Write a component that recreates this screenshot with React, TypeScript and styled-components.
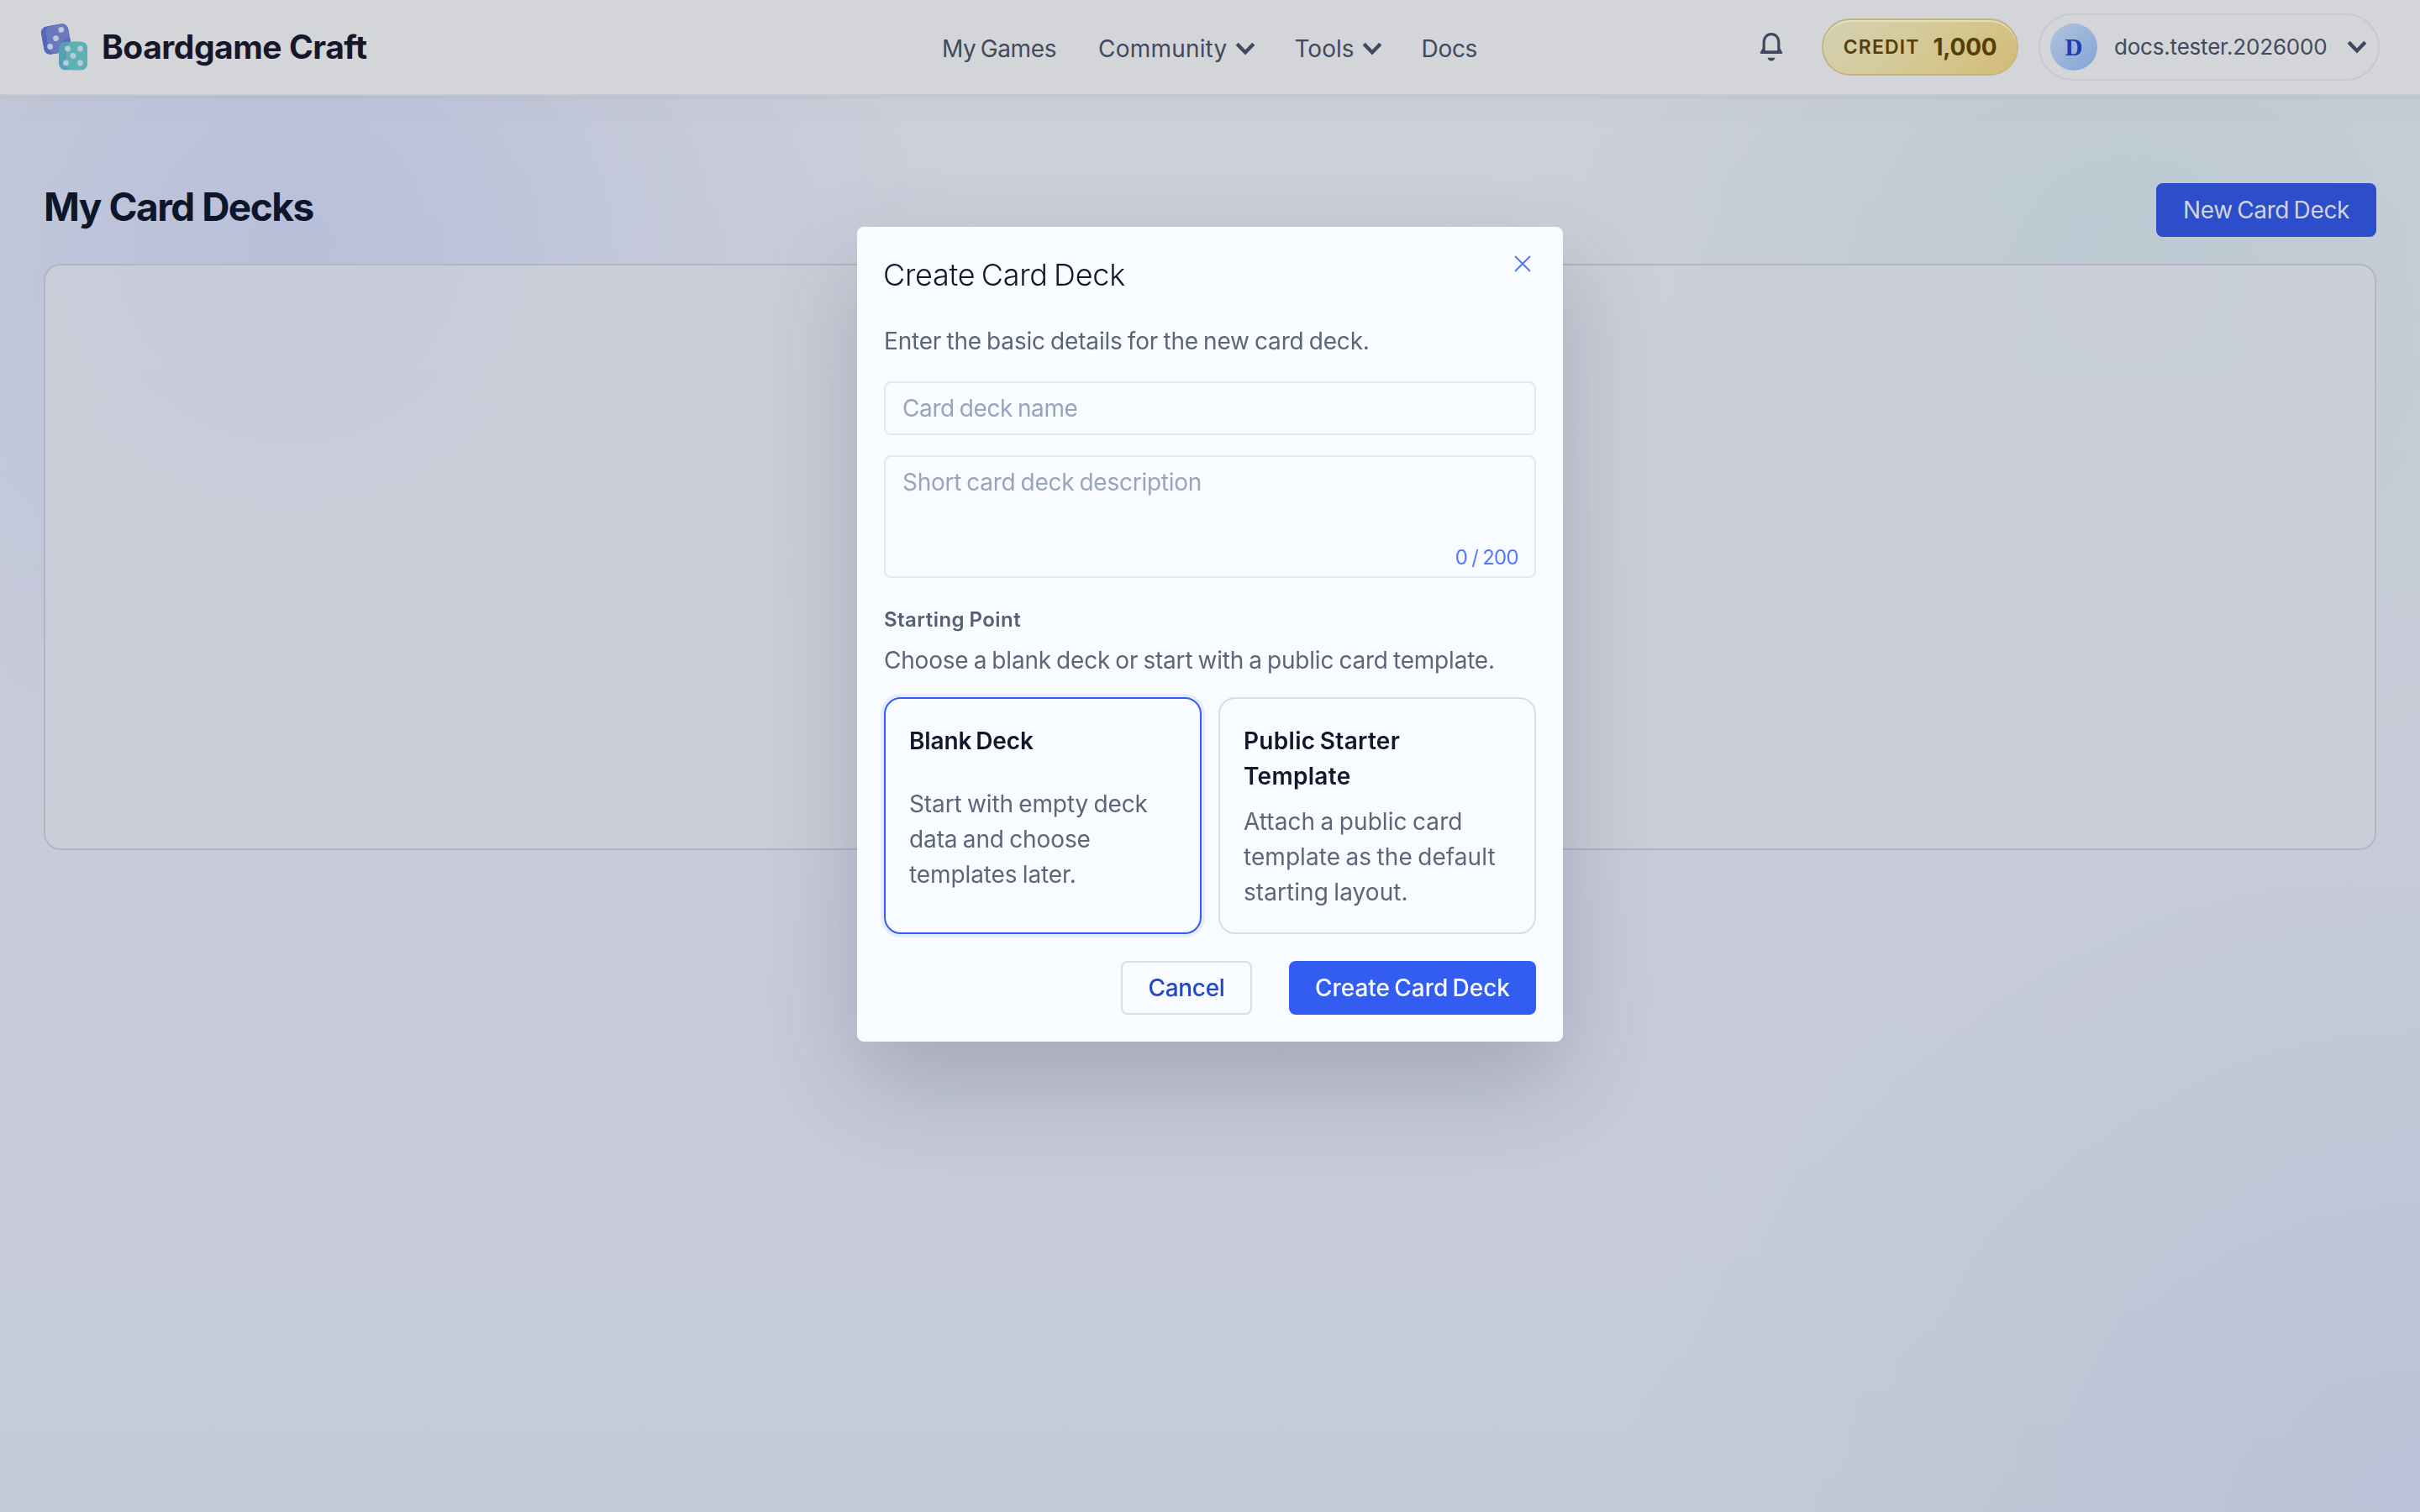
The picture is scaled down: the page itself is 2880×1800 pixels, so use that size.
import React from 'react';
import styled, { createGlobalStyle } from 'styled-components';

const GlobalStyle = createGlobalStyle`
  * { box-sizing: border-box; }
  body {
    margin: 0;
    font-family: Inter, "Liberation Sans", sans-serif;
    background: #c8ccd8;
  }
  button { font: inherit; }
  h1, h2, p { margin: 0; }
`;

const Page = styled.div`
  width: 2880px;
  height: 1800px;
  overflow: hidden;
  display: flex;
  flex-direction: column;
  background:
    radial-gradient(circle at 12% 16%, rgba(168, 180, 217, 0.58), rgba(168, 180, 217, 0) 27%),
    radial-gradient(circle at 88% 18%, rgba(166, 194, 200, 0.45), rgba(166, 194, 200, 0) 25%),
    radial-gradient(circle at 100% 100%, rgba(168, 180, 213, 0.4), rgba(168, 180, 213, 0) 28%),
    linear-gradient(180deg, #cfd1da 0%, #cacdd9 50%, #c4cbd7 100%);
`;

const Header = styled.header`
  height: 114px;
  flex: none;
  display: grid;
  grid-template-columns: 1fr auto 1fr;
  align-items: center;
  padding: 0 48px 0 47px;
  background: #d4d5d9;
  border-bottom: 2px solid #c7c9cc;
  box-shadow: 0 2px 6px rgba(15, 23, 42, 0.05), 0 31px 0 rgba(110, 130, 160, 0.025);
`;

const Brand = styled.div`
  display: flex;
  align-items: center;
  gap: 17px;
`;

const BrandName = styled.span`
  font-size: 39px;
  font-weight: 700;
  line-height: 56px;
  letter-spacing: -0.47px;
  color: #17172b;
`;

const Nav = styled.nav`
  display: flex;
  align-items: center;
  gap: 46px;
`;

const NavItem = styled.a<{ $track?: number; $after?: number }>`
  display: flex;
  align-items: center;
  gap: 10px;
  margin-right: ${(p) => p.$after ?? 0}px;
  font-size: 28px;
  line-height: 42px;
  padding-top: 3px;
  letter-spacing: ${(p) => p.$track ?? 0}px;
  word-spacing: -2px;
  color: #3f4a60;
`;

const Account = styled.div`
  display: flex;
  align-items: center;
  justify-content: flex-end;
`;

const Credit = styled.div`
  width: 234px;
  height: 68px;
  margin: 0 24px 0 46px;
  display: flex;
  align-items: center;
  justify-content: center;
  gap: 16px;
  border: 2px solid #c4b67c;
  border-radius: 34px;
  background: linear-gradient(135deg, #d5d0b4 0%, #d4c88f 60%, #d2bb77 100%);
  box-shadow: inset 0 2px 0 rgba(235, 232, 215, 0.7);
  color: #573d0b;
`;

const CreditLabel = styled.span`
  font-size: 23px;
  font-weight: 600;
  letter-spacing: 1.15px;
`;

const CreditValue = styled.span`
  font-size: 28px;
  font-weight: 700;
  letter-spacing: -0.3px;
`;

const Profile = styled.div`
  width: 406px;
  height: 80px;
  display: flex;
  align-items: center;
  padding: 0 13px 0 12px;
  border: 2px solid #c7c9ce;
  border-radius: 40px;
`;

const Avatar = styled.span`
  width: 56px;
  height: 56px;
  display: grid;
  place-items: center;
  border-radius: 50%;
  background: linear-gradient(135deg, #b2c2dc, #7fa5d6);
  font-family: "Liberation Serif", serif;
  font-size: 29px;
  font-weight: 700;
  line-height: 34px;
  color: #1d3db5;
`;

const UserName = styled.span`
  flex: 1;
  padding: 0 0 2px 20px;
  font-size: 26px;
  letter-spacing: -0.2px;
  white-space: nowrap;
  color: #3f4a60;
`;

const Main = styled.main`
  padding: 104px 52px 0;
`;

const TitleRow = styled.div`
  height: 64px;
  display: flex;
  justify-content: space-between;
  align-items: center;
  margin-bottom: 32px;
`;

const PageTitle = styled.h1`
  font-size: 46px;
  font-weight: 700;
  line-height: 60px;
  padding: 0 0 8px 0;
  letter-spacing: -1.5px;
  color: #0e162b;
`;

const Button = styled.button<{ $kind: 'muted' | 'primary' | 'outline'; $w: number; $track: number }>`
  width: ${(p) => p.$w}px;
  height: 64px;
  padding: 0;
  border-radius: 8px;
  font-size: 28px;
  font-weight: ${(p) => (p.$kind === 'muted' ? 400 : 450)};
  line-height: 42px;
  letter-spacing: ${(p) => p.$track}px;
  word-spacing: -2px;
  white-space: nowrap;
  border: ${(p) => (p.$kind === 'outline' ? '2px solid #d8dce5' : '0')};
  background: ${(p) => ({ muted: '#2c4ecb', primary: '#335cf1', outline: '#f8fbff' })[p.$kind]};
  color: ${(p) => ({ muted: '#d0d4de', primary: '#f8fbff', outline: '#2447c6' })[p.$kind]};
`;

const DeckPanel = styled.section`
  height: 698px;
  border: 2px solid #b0b6c3;
  border-radius: 20px;
  background: rgba(204, 208, 217, 0.82);
`;

const Backdrop = styled.div`
  position: fixed;
  inset: 0;
  display: flex;
  justify-content: center;
  align-items: flex-start;
  padding-top: 270px;
`;

const Dialog = styled.div`
  width: 840px;
  height: 970px;
  padding: 32px;
  display: flex;
  flex-direction: column;
  border-radius: 8px;
  background: #f8fbff;
  box-shadow: 0 48px 120px rgba(40, 48, 80, 0.24);
`;

const DialogHead = styled.div`
  display: flex;
  justify-content: space-between;
  height: 83px;
`;

const DialogTitle = styled.h2`
  font-size: 36px;
  font-weight: 350;
  line-height: 50px;
  letter-spacing: -0.25px;
  word-spacing: -2.5px;
  margin-left: -1px;
  color: #10182c;
`;

const CloseIcon = styled.svg`
  width: 24px;
  height: 24px;
  margin-right: 4px;
`;

const Copy = styled.p<{ $track?: number }>`
  font-size: 28px;
  font-weight: 370;
  line-height: 42px;
  letter-spacing: ${(p) => p.$track ?? -0.1}px;
  word-spacing: -1.5px;
  white-space: pre-line;
  color: #5b6679;
`;

const Field = styled.div`
  height: 64px;
  margin-top: 27px;
  padding: 9px 20px;
  border: 2px solid #e4e8ee;
  border-radius: 8px;
`;

const AreaField = styled(Field)`
  height: 146px;
  margin-top: 24px;
  padding: 9px 19px 8px 20px;
  display: flex;
  flex-direction: column;
  justify-content: space-between;
`;

const Placeholder = styled.span<{ $track: number }>`
  display: block;
  font-size: 28px;
  line-height: 42px;
  letter-spacing: ${(p) => p.$track}px;
  word-spacing: -1.5px;
  color: #97a5bb;
`;

const Counter = styled.span`
  align-self: flex-end;
  font-size: 24px;
  line-height: 28px;
  letter-spacing: -0.7px;
  word-spacing: -1px;
  color: #527af8;
`;

const SectionLabel = styled.p`
  margin-top: 32px;
  font-size: 24px;
  font-weight: 600;
  line-height: 36px;
  letter-spacing: 0.45px;
  word-spacing: -1px;
  color: #536075;
  margin-bottom: 9px;
`;

const Options = styled.div`
  display: grid;
  grid-template-columns: 1fr 1fr;
  gap: 20px;
  height: 282px;
  margin-top: 23px;
`;

const Option = styled.div<{ $selected?: boolean }>`
  padding: 29px 28px 27px;
  display: grid;
  align-content: stretch;
  gap: 12px;
  border: 2px solid ${(p) => (p.$selected ? '#335cf1' : '#d9dde5')};
  border-radius: 20px;
  box-shadow: ${(p) => (p.$selected ? '0 0 0 4px #e7edff' : 'none')};
`;

const OptionTitle = styled.p<{ $track: number }>`
  font-size: 28px;
  font-weight: 600;
  line-height: 42px;
  letter-spacing: ${(p) => p.$track}px;
  word-spacing: -2px;
  white-space: pre-line;
  color: #10182c;
`;

const Actions = styled.div`
  display: flex;
  justify-content: flex-end;
  gap: 44px;
  margin-top: 32px;
`;

const Chevron = () => (
  <svg width="24" height="16" viewBox="0 0 24 16">
    <path d="M2.2 2.2 12 12.4 21.8 2.2" fill="none" stroke="#3f4a60" strokeWidth="4.4" />
  </svg>
);

const Bell = () => (
  <svg width="28" height="36" viewBox="0 0 28 36">
    <path
      d="M5.2 23.5V12.5C5.2 6.3 9 2.6 14 2.6S22.8 6.3 22.8 12.500v11"
      fill="none" stroke="#3f4a60" strokeWidth="3.2"
    />
    <path d="M4 19 .8 24.200q-.6 1.800 1.200 1.800h24q1.800 0 1.200-1.800L24 19v3.200H4z" fill="#3f4a60" />
    <path d="M9.500 30.800h9q-1 3.800-4.500 3.800t-4.500-3.800z" fill="#3f4a60" />
  </svg>
);

const Dice = () => (
  <svg width="57" height="58" viewBox="0 0 57 58">
    <defs>
      <clipPath id="violetDie"><rect width="33" height="34" rx="8" /></clipPath>
      <clipPath id="tealDie"><rect width="34" height="34" rx="8" /></clipPath>
    </defs>
    <g transform="translate(.5 5.700) rotate(-10)">
      <g clipPath="url(#violetDie)">
        <rect width="33" height="34" fill="#5667b8" />
        <rect x="6" width="30" height="34" rx="8" fill="#6a78bd" />
        <circle cx="33" cy="33" r="15" fill="#5667b8" opacity=".7" />
      </g>
      <g fill="#bac8d8">
        <circle cx="24.500" cy="7" r="3.400" /><circle cx="16.500" cy="16" r="3.400" /><circle cx="8" cy="24.500" r="3.400" />
      </g>
    </g>
    <g transform="translate(23 22.500)">
      <g clipPath="url(#tealDie)">
        <rect width="34" height="34" fill="#579fb2" />
        <rect x="9" width="30" height="34" rx="8" fill="#5eb1b2" />
      </g>
      <g fill="#bac8d8">
        <circle cx="10.500" cy="8.500" r="3.400" /><circle cx="25.500" cy="8.500" r="3.400" />
        <circle cx="17" cy="17" r="3.400" />
        <circle cx="8.500" cy="25.500" r="3.400" /><circle cx="25.500" cy="25.500" r="3.400" />
      </g>
    </g>
  </svg>
);

export default function App() {
  return (
    <>
      <GlobalStyle />
      <Page>
        <Header>
          <Brand>
            <Dice />
            <BrandName>Boardgame Craft</BrandName>
          </Brand>
          <Nav>
            <NavItem $track={-0.4} $after={4}>My Games</NavItem>
            <NavItem $track={0.2}>Community <Chevron /></NavItem>
            <NavItem>Tools <Chevron /></NavItem>
            <NavItem $track={-0.3}>Docs</NavItem>
          </Nav>
          <Account>
            <Bell />
            <Credit>
              <CreditLabel>CREDIT</CreditLabel>
              <CreditValue>1,000</CreditValue>
            </Credit>
            <Profile>
              <Avatar>D</Avatar>
              <UserName>docs.tester.2026000</UserName>
              <Chevron />
            </Profile>
          </Account>
        </Header>
        <Main>
          <TitleRow>
            <PageTitle>My Card Decks</PageTitle>
            <Button $kind="muted" $w={262} $track={-0.37}>New Card Deck</Button>
          </TitleRow>
          <DeckPanel />
        </Main>
      </Page>
      <Backdrop>
        <Dialog>
          <DialogHead>
            <DialogTitle>Create Card Deck</DialogTitle>
            <CloseIcon viewBox="0 0 24 24">
              <path d="M3 3 21 21M21 3 3 21" stroke="#527af8" strokeWidth="2" />
            </CloseIcon>
          </DialogHead>
          <Copy $track={-0.18}>Enter the basic details for the new card deck.</Copy>
          <Field><Placeholder $track={-0.4}>Card deck name</Placeholder></Field>
          <AreaField>
            <Placeholder $track={-0.26}>Short card deck description</Placeholder>
            <Counter>0 / 200</Counter>
          </AreaField>
          <SectionLabel>Starting Point</SectionLabel>
          <Copy $track={-0.2}>Choose a blank deck or start with a public card template.</Copy>
          <Options>
            <Option $selected>
              <OptionTitle $track={-0.12}>Blank Deck</OptionTitle>
              <Copy $track={-0.1}>{'Start with empty deck\ndata and choose\ntemplates later.'}</Copy>
            </Option>
            <Option>
              <OptionTitle $track={0.3}>{'Public Starter\nTemplate'}</OptionTitle>
              <Copy $track={0.06}>{'Attach a public card\ntemplate as the default\nstarting layout.'}</Copy>
            </Option>
          </Options>
          <Actions>
            <Button $kind="outline" $w={156} $track={-0.3}>Cancel</Button>
            <Button $kind="primary" $w={294} $track={-0.05}>Create Card Deck</Button>
          </Actions>
        </Dialog>
      </Backdrop>
    </>
  );
}
